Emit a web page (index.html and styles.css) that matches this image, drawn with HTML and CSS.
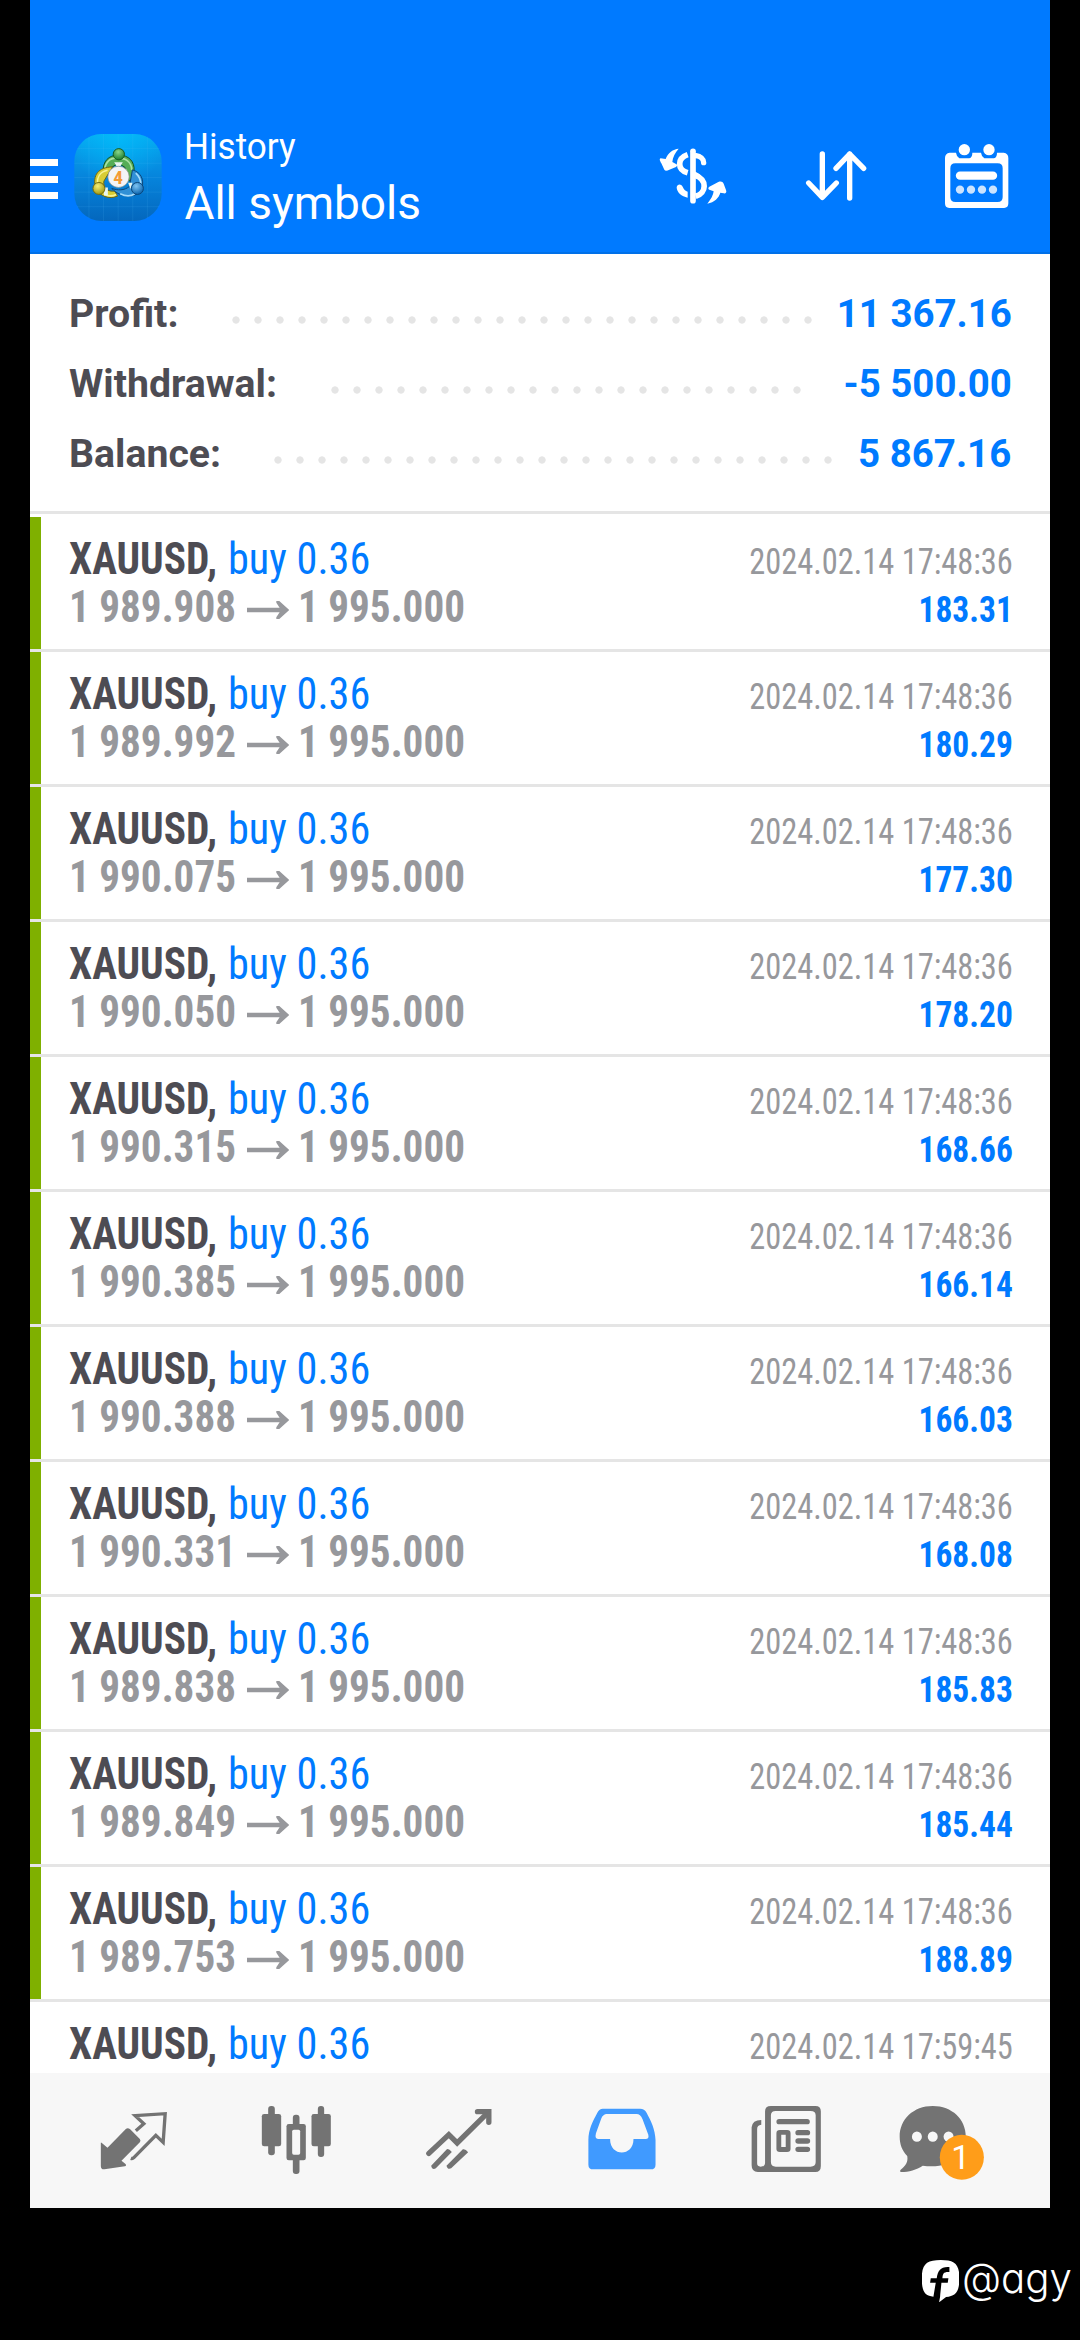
FILE: index.html
```
<!DOCTYPE html>
<html lang="en">
<head>
<meta charset="utf-8">
<title>History</title>
<link rel="stylesheet" href="styles.css">
</head>
<body>
<svg class="defs" aria-hidden="true">
  <symbol id="arrow" viewBox="0 0 127 54"><path d="M0 20H98L88 5V0H97L127 27L97 54H88V49L98 34H0Z" fill="#97989c"/></symbol>
</svg>
<main class="app">
  <header class="bar">
    <div class="menu"><i></i><i></i><i></i></div>
    <svg class="logo" viewBox="12 10 263 262">
      <defs>
        <linearGradient id="sky" x1="0" y1="0" x2="0" y2="1"><stop offset="0" stop-color="#06aaf0"/><stop offset=".5" stop-color="#0684dc"/><stop offset="1" stop-color="#0467bd"/></linearGradient>
        <radialGradient id="glow" cx=".5" cy=".05" r=".55"><stop offset="0" stop-color="#00c4ff" stop-opacity=".6"/><stop offset="1" stop-color="#00c4ff" stop-opacity="0"/></radialGradient>
        <radialGradient id="gG" cx=".45" cy=".3" r=".7"><stop offset="0" stop-color="#8bd68a"/><stop offset="1" stop-color="#1b7d2d"/></radialGradient>
        <radialGradient id="gY" cx=".4" cy=".3" r=".7"><stop offset="0" stop-color="#f5ee74"/><stop offset="1" stop-color="#a39a13"/></radialGradient>
        <radialGradient id="gB" cx=".4" cy=".3" r=".7"><stop offset="0" stop-color="#7fc4f2"/><stop offset="1" stop-color="#0b64ae"/></radialGradient>
      </defs>
      <rect x="12" y="10" width="263" height="262" rx="82" fill="url(#sky)"/>
      <rect x="12" y="10" width="263" height="262" rx="82" fill="url(#glow)"/>
      <path d="M56 18V264M100 10V272M144 10V272M188 10V272M232 18V264M20 54H268M12 98H275M12 141H275M12 185H275M20 229H268" stroke="#5cc0f5" stroke-opacity=".2" stroke-width="2"/>
      <path d="M99 124C97 92 115 74 145 73C176 74 194 92 192 122C191 138 186 146 177 152L164 110L145 98L118 114Z" fill="#55ad56" stroke="#17521f" stroke-width="3"/>
      <path d="M103 118C106 94 120 82 142 82C166 82 184 94 185 118" fill="none" stroke="#a9e0a2" stroke-width="5"/>
      <path d="M127 109C84 110 66 134 76 172C88 198 118 208 142 197L134 182C112 184 98 174 101 152Z" fill="#d8cd35" stroke="#6d6410" stroke-width="3"/>
      <path d="M112 119C88 124 80 142 82 160M102 191C114 198 126 198 138 192" fill="none" stroke="#f8f294" stroke-width="5"/>
      <path d="M187 118C213 126 222 145 216 174C205 201 155 208 125 174C142 180 162 181 178 168Z" fill="#3190d6" stroke="#0b4679" stroke-width="3"/>
      <path d="M197 128C209 139 213 150 211 163M150 190C168 199 184 197 194 190" fill="none" stroke="#a4dbfb" stroke-width="5"/>
      <path d="M132 95H158L151 106H139ZM101 171H113V195H101ZM174 157H187L181 176Z" fill="#e8f5f1"/>
      <circle cx="146" cy="71" r="17" fill="url(#gG)" stroke="#165c23" stroke-width="3"/>
      <circle cx="86" cy="174" r="18" fill="url(#gY)" stroke="#726a10" stroke-width="3"/>
      <circle cx="202" cy="174" r="18" fill="url(#gB)" stroke="#0b4679" stroke-width="3"/>
      <circle cx="145" cy="139" r="32" fill="#f3f3f6" stroke="#8b8f86" stroke-width="2"/>
      <text x="144" y="161" class="logo-num" text-anchor="middle">4</text>
    </svg>
    <div class="titles">
      <div class="kicker"><span class="k">History</span></div>
      <div class="title">All symbols</div>
    </div>
    <svg class="act" viewBox="0 0 630 330">
      <g fill="none" stroke="#fff" stroke-linecap="round">
        <path d="M126 37V185" stroke-width="17"/>
        <path d="M135 52C148 54 158 62 158 73" stroke-width="16" transform="translate(0 -2)"/>
        <path d="M110 47C78 58 78 92 110 101" stroke-width="17" stroke-linecap="butt"/>
        <path d="M134 110C168 122 168 162 134 172" stroke-width="17" stroke-linecap="butt"/>
        <path d="M129 104L142 111" stroke-width="14"/>
      </g>
      <path d="M77 145C79 134 90 134 95 143C98 151 103 156 110 158V176C92 173 77 160 77 145Z" fill="#fff"/>
      <path d="M83 29C67 30 50 42 44 60L29 58C24 60 27 66 31 73L40 92C43 97 49 95 55 92L75 84C80 80 79 76 75 75L64 69C65 55 73 40 83 29Z" fill="#fff"/>
      <path d="M169 194C180 181 187 168 188 157L175 152C171 150 171 146 175 143L202 129C210 126 215 128 218 134L225 153C228 160 224 164 218 163L208 161C204 176 190 190 169 194Z" fill="#fff"/>
      <g fill="none" stroke="#fff" stroke-width="16" stroke-linecap="round" stroke-linejoin="round">
        <path d="M514 45V173M473 132L514 175L556 132"/>
        <path d="M596 177V45M555 88L596 45L638 88"/>
      </g>
    </svg>
    <svg class="cal" viewBox="0 0 192 194">
      <path fill="#fff" fill-rule="evenodd" d="M14 26H33A24 24 0 0 0 43 43H73Q82 40 82 26H108A24 24 0 0 0 118 43H147Q156 40 156 26H176Q190 28 190 42V178Q190 192 176 192H14Q0 192 0 178V42Q0 28 14 26ZM31 58Q16 58 16 73V159Q16 174 31 174H158Q173 174 173 159V73Q173 58 158 58Z"/>
      <circle cx="58" cy="17" r="17" fill="#fff"/><circle cx="132" cy="17" r="17" fill="#fff"/>
      <path d="M45 95H144" stroke="#fff" stroke-width="25" stroke-linecap="round"/>
      <g fill="#cce4ff"><circle cx="45" cy="137" r="12.5"/><circle cx="78" cy="137" r="12.5"/><circle cx="111" cy="137" r="12.5"/><circle cx="144" cy="137" r="12.5"/></g>
    </svg>
  </header>

  <section class="summary">
    <div class="sum"><span class="lbl">Profit:</span><span class="dots profit"></span><span class="amt">11 367.16</span></div>
    <div class="sum"><span class="lbl">Withdrawal:</span><span class="dots withdrawal"></span><span class="amt">-5 500.00</span></div>
    <div class="sum"><span class="lbl">Balance:</span><span class="dots balance"></span><span class="amt">5 867.16</span></div>
  </section>

  <section class="deals">
    <article class="deal"><div class="what"><div class="ln"><b class="sym">XAUUSD,</b><span class="side">buy 0.36</span></div><div class="ln px"><b class="from">1 989.908</b><svg class="arr"><use href="#arrow"/></svg><b class="to">1 995.000</b></div></div><div class="res"><div class="date">2024.02.14 17:48:36</div><div class="pl">183.31</div></div></article>
    <article class="deal"><div class="what"><div class="ln"><b class="sym">XAUUSD,</b><span class="side">buy 0.36</span></div><div class="ln px"><b class="from">1 989.992</b><svg class="arr"><use href="#arrow"/></svg><b class="to">1 995.000</b></div></div><div class="res"><div class="date">2024.02.14 17:48:36</div><div class="pl">180.29</div></div></article>
    <article class="deal"><div class="what"><div class="ln"><b class="sym">XAUUSD,</b><span class="side">buy 0.36</span></div><div class="ln px"><b class="from">1 990.075</b><svg class="arr"><use href="#arrow"/></svg><b class="to">1 995.000</b></div></div><div class="res"><div class="date">2024.02.14 17:48:36</div><div class="pl">177.30</div></div></article>
    <article class="deal"><div class="what"><div class="ln"><b class="sym">XAUUSD,</b><span class="side">buy 0.36</span></div><div class="ln px"><b class="from">1 990.050</b><svg class="arr"><use href="#arrow"/></svg><b class="to">1 995.000</b></div></div><div class="res"><div class="date">2024.02.14 17:48:36</div><div class="pl">178.20</div></div></article>
    <article class="deal"><div class="what"><div class="ln"><b class="sym">XAUUSD,</b><span class="side">buy 0.36</span></div><div class="ln px"><b class="from">1 990.315</b><svg class="arr"><use href="#arrow"/></svg><b class="to">1 995.000</b></div></div><div class="res"><div class="date">2024.02.14 17:48:36</div><div class="pl">168.66</div></div></article>
    <article class="deal"><div class="what"><div class="ln"><b class="sym">XAUUSD,</b><span class="side">buy 0.36</span></div><div class="ln px"><b class="from">1 990.385</b><svg class="arr"><use href="#arrow"/></svg><b class="to">1 995.000</b></div></div><div class="res"><div class="date">2024.02.14 17:48:36</div><div class="pl">166.14</div></div></article>
    <article class="deal"><div class="what"><div class="ln"><b class="sym">XAUUSD,</b><span class="side">buy 0.36</span></div><div class="ln px"><b class="from">1 990.388</b><svg class="arr"><use href="#arrow"/></svg><b class="to">1 995.000</b></div></div><div class="res"><div class="date">2024.02.14 17:48:36</div><div class="pl">166.03</div></div></article>
    <article class="deal"><div class="what"><div class="ln"><b class="sym">XAUUSD,</b><span class="side">buy 0.36</span></div><div class="ln px"><b class="from">1 990.331</b><svg class="arr"><use href="#arrow"/></svg><b class="to">1 995.000</b></div></div><div class="res"><div class="date">2024.02.14 17:48:36</div><div class="pl">168.08</div></div></article>
    <article class="deal"><div class="what"><div class="ln"><b class="sym">XAUUSD,</b><span class="side">buy 0.36</span></div><div class="ln px"><b class="from">1 989.838</b><svg class="arr"><use href="#arrow"/></svg><b class="to">1 995.000</b></div></div><div class="res"><div class="date">2024.02.14 17:48:36</div><div class="pl">185.83</div></div></article>
    <article class="deal"><div class="what"><div class="ln"><b class="sym">XAUUSD,</b><span class="side">buy 0.36</span></div><div class="ln px"><b class="from">1 989.849</b><svg class="arr"><use href="#arrow"/></svg><b class="to">1 995.000</b></div></div><div class="res"><div class="date">2024.02.14 17:48:36</div><div class="pl">185.44</div></div></article>
    <article class="deal"><div class="what"><div class="ln"><b class="sym">XAUUSD,</b><span class="side">buy 0.36</span></div><div class="ln px"><b class="from">1 989.753</b><svg class="arr"><use href="#arrow"/></svg><b class="to">1 995.000</b></div></div><div class="res"><div class="date">2024.02.14 17:48:36</div><div class="pl">188.89</div></div></article>
    <article class="deal plain"><div class="what"><div class="ln"><b class="sym">XAUUSD,</b><span class="side">buy 0.36</span></div></div><div class="res"><div class="date">2024.02.14 17:59:45</div></div></article>
  </section>

  <nav class="tabs">
    <svg viewBox="94.5 339 490 405">
      <path d="M241 549Q241 546 244 549L261 563L316 507Q322 502 329 508L358 537Q362 542 358 547L303 602L315 612Q319 617 313 619L252 628Q241 629 241 618Z" fill="#737373"/>
      <path d="M346 512L370 491L344 467L434 461L428 547L406 526L340 593Q336 597 331 595" fill="none" stroke="#737373" stroke-width="10"/>
    </svg>
    <svg viewBox="584.5 339 490 405">
      <g fill="#737373"><rect x="744" y="438" width="20" height="148" rx="9"/><rect x="725" y="462" width="58" height="97" rx="7"/><rect x="893" y="438" width="19" height="153" rx="9"/><rect x="874" y="462" width="58" height="97" rx="7"/><rect x="818" y="464" width="20" height="178" rx="9"/><rect x="799" y="492" width="58" height="109" rx="7"/></g>
      <rect x="816" y="509" width="24" height="75" rx="5" fill="#f7f7f7"/>
    </svg>
    <svg viewBox="1074.5 339 490 405">
      <g fill="none" stroke="#737373" stroke-width="16" stroke-linecap="round"><path d="M1227 580L1287 524L1312 549L1404 458" stroke-linejoin="miter"/><path d="M1373 455H1407V487" stroke-linejoin="miter"/></g>
      <path d="M1281 568Q1286 564 1296 576L1248 625Q1237 631 1234 617ZM1329 568Q1337 566 1345 577L1294 625Q1283 630 1280 617Z" fill="#737373"/>
    </svg>
    <svg viewBox="4.4 339 474.3 405" preserveAspectRatio="none">
      <path d="M184 446H292Q305 446 311 458C324 483 336 508 337 540V614Q337 628 323 628H156Q142 628 142 614V540C142 508 155 483 168 458Q174 446 184 446ZM195 462Q185 463 180 474L164 520Q160 537 170 537H205C205 591 273 591 273 537H308Q319 537 316 524L299 477Q293 462 282 462Z" fill="#409aff" fill-rule="evenodd"/>
    </svg>
    <svg viewBox="478.6 339 474.3 405" preserveAspectRatio="none">
      <path fill="#737373" fill-rule="evenodd" d="M670 438H799Q815 438 815 454V618Q815 636 799 636H632Q614 636 614 616V502Q616 480 642 480V494Q630 495 630 507V610Q630 620 640 620Q653 620 653 608V454Q653 438 670 438ZM684 453Q670 453 670 466V606Q670 620 684 620H785Q800 620 800 606V466Q800 453 785 453Z"/>
      <path d="M694 485H775M749 518H776M749 543H776M749 568H776" stroke="#737373" stroke-width="16" stroke-linecap="round"/>
      <path fill="#737373" fill-rule="evenodd" d="M696 510H717Q727 510 727 520V567Q727 576 717 576H696Q686 576 686 567V520Q686 510 696 510ZM700 524V561H713V524Z"/>
    </svg>
    <svg viewBox="953 339 474.3 405" preserveAspectRatio="none">
      <path d="M1141 438C1197 438 1237 478 1237 530C1237 584 1195 628 1112 617C1094 629 1071 636 1050 636Q1043 635 1048 629C1062 618 1070 606 1067 588C1052 572 1045 552 1045 530C1045 478 1085 438 1141 438Z" fill="#737373"/>
      <g fill="#f7f7f7"><ellipse cx="1095" cy="530" rx="14.5" ry="15.5"/><ellipse cx="1141" cy="530" rx="14.5" ry="15.5"/><ellipse cx="1187" cy="530" rx="14.5" ry="15.5"/></g>
      <ellipse cx="1225.500" cy="592" rx="64" ry="67.500" fill="#ff9d19"/>
      <text x="1222" y="626" class="count" text-anchor="middle">1</text>
    </svg>
  </nav>
</main>
<footer class="mark">
  <svg viewBox="125 180 112 127"><path fill="#fff" fill-rule="evenodd" d="M181 180C222 180 237 191 237 235C237 276 225 289 197 291L176 307L179 290C180 277 182 260 183 248H202L204 235H186C187 221 189 215 207 216V201C181 199 172 211 169 235H151L149 248H166L159 290C134 288 124 276 124 235C124 192 139 180 181 180Z"/></svg>
  <span class="handle">@agy</span>
</footer>
</body>
</html>
```
FILE: styles.css
```
* { box-sizing: border-box; }
body { margin: 0; width: 1080px; height: 2340px; overflow: hidden; background: #000; font-family: Roboto, sans-serif; }
.defs { display: none; }
.app { display: flex; flex-direction: column; width: 1020px; height: 2208px; margin-left: 30px; background: #fff; overflow: hidden; }

.bar { display: flex; flex: none; align-items: flex-start; height: 254px; background: #007aff; border-bottom: 2px solid #0070e8; color: #fff; }
.menu { display: flex; flex-direction: column; gap: 9.5px; width: 28px; margin-top: 159px; }
.menu i { height: 7px; background: #fff; }
.logo { width: 88px; height: 87px; margin: 133.5px 0 0 16px; }
.logo-num { font: 700 58px "Roboto Condensed", sans-serif; fill: #f39a35; }
.titles { width: 300px; margin: 126px 0 0 22.4px; white-space: nowrap; }
.kicker { font-size: 36px; line-height: 42px; margin-bottom: 8px; }
.k { display: inline-block; transform: scaleX(.975); transform-origin: left; }
.title { font-size: 46px; line-height: 54px; }
.act { flex: none; width: 210px; height: 110px; margin: 139px 0 0 166.6px; overflow: visible; }
.cal { flex: none; width: 64px; height: 64.7px; margin: 143.7px 0 0 84px; }

.summary { flex: none; height: 260px; padding: 25px 38.5px 0 39.4px; border-bottom: 3px solid #e5e5e5; }
.sum { display: flex; height: 70px; font-size: 39.5px; font-weight: 700; line-height: 70px; white-space: nowrap; }
.lbl { width: 160px; color: #4d4c53; transform: scaleX(.993); transform-origin: left; }
.dots { height: 22px; margin-top: 30.4px; background: radial-gradient(circle at center, #e5e5e5 3.3px, rgba(229,229,229,0) 4px) 0 0 / 22px 22px repeat-x; }
.profit { width: 594px; margin-left: -4px; }
.withdrawal { width: 484px; margin-left: 95px; }
.balance { width: 572px; margin-left: 37.2px; }
.amt { margin-left: auto; color: #007aff; transform: scaleX(.974); transform-origin: right; }

.deals { flex: 1; min-height: 0; padding-top: 3px; overflow: hidden; font-family: "Roboto Condensed", sans-serif; }
.deal { display: flex; justify-content: space-between; height: 135px; padding-right: 37.2px; border-bottom: 3px solid #e5e5e5; background: linear-gradient(#7fb000, #7fb000) 0 0 / 11px 132px no-repeat; white-space: nowrap; }
.deal.plain { background: none; }
.what { padding: 18px 0 0 39.3px; font-size: 44px; }
.ln { display: flex; height: 48px; line-height: 48px; }
.ln > * { transform-origin: left; }
.sym { width: 158.5px; color: #4d4c53; transform: scaleX(.94); }
.side { color: #007aff; transform: scaleX(.96); }
.px { color: #97989c; }
.from { width: 177.4px; transform: scaleX(.935); }
.arr { width: 42.3px; height: 18px; margin: 18px 9px 0 0; }
.to { transform: scaleX(.935); }
.res { padding-top: 21px; font-size: 36px; line-height: 48px; text-align: right; }
.date { color: #97989c; transform: scaleX(.9); transform-origin: right; }
.pl { color: #007aff; font-weight: 700; transform: scaleX(.93); transform-origin: right; }

.tabs { display: grid; flex: none; grid-template-columns: repeat(6, 163.33px); height: 135px; padding-left: 21.5px; background: #f7f7f7; }
.tabs svg { width: 163.33px; height: 135px; }
.count { font: 400 97px Roboto, sans-serif; fill: #fff; }

.mark { display: flex; align-items: flex-start; padding: 52px 0 0 921.5px; color: #fff; }
.mark svg { flex: none; width: 37.5px; height: 42.3px; }
.handle { margin: -7px 0 0 3.3px; font: 300 42px/50px Inter, sans-serif; font-feature-settings: "cv11"; transform: scaleX(.957); transform-origin: left; }
```
